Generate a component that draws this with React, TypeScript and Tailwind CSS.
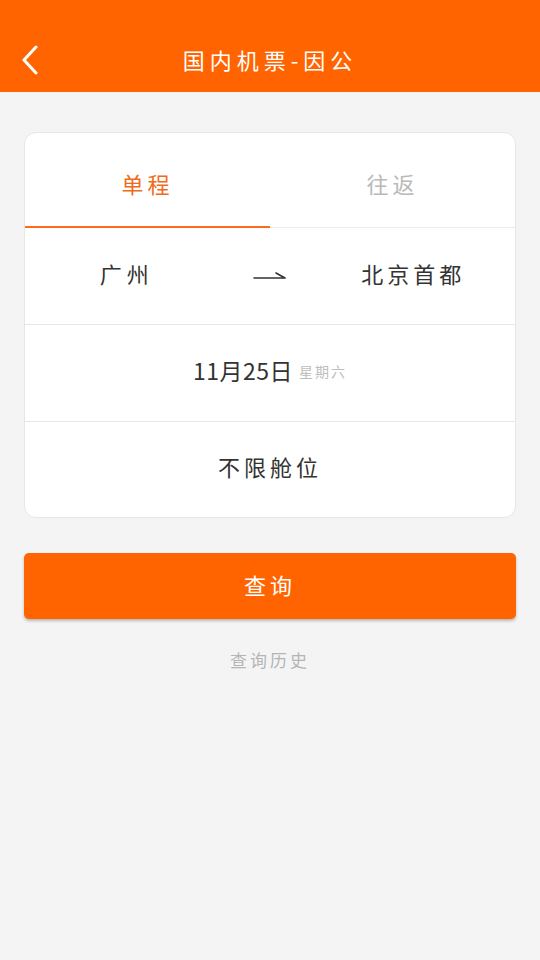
const FONT = { fontFamily: '"Noto Sans CJK SC", "Noto Sans", sans-serif' };

function BackIcon() {
  return (
    <svg width="20" height="30" viewBox="0 0 20 30" fill="none">
      <path d="M16 2 L4 15 L16 28" stroke="#fff" strokeWidth="3" strokeLinecap="round" strokeLinejoin="round" />
    </svg>
  );
}

function ArrowIcon() {
  return (
    <svg width="34" height="12" viewBox="0 0 34 12" fill="none">
      <path d="M1 9 H32 M23 4 L32 9" stroke="#333" strokeWidth="1.6" strokeLinecap="round" />
    </svg>
  );
}

export default function App() {
  return (
    <div className="min-h-[960px] w-[540px] bg-[#f4f4f4]" style={FONT}>
      {/* Header */}
      <div className="relative flex h-[92px] items-center justify-center bg-[#ff6400] pt-[26px]">
        <div className="absolute left-[20px] top-[45px]">
          <BackIcon />
        </div>
        <span className="text-[22px] tracking-[5px] text-white">国内机票-因公</span>
      </div>

      <div className="px-[24px] pt-[40px]">
        {/* Card */}
        <div className="overflow-hidden rounded-[12px] border border-[#e6e6e6] bg-white">
          {/* Tabs */}
          <div className="flex h-[95px] border-b border-[#ececec] pt-[6px]">
            <div className="relative flex flex-1 items-center justify-center">
              <span className="text-[22px] tracking-[4px] text-[#f06a1c]">单程</span>
              <div className="absolute bottom-[-1px] left-0 right-0 h-[2px] bg-[#ff6a1a]" />
            </div>
            <div className="flex flex-1 items-center justify-center">
              <span className="text-[22px] tracking-[4px] text-[#b9b9b9]">往返</span>
            </div>
          </div>

          {/* Cities */}
          <div className="grid h-[97px] grid-cols-3 items-center border-b border-[#e6e6e6] px-[30px] pb-[6px]">
            <span className="text-center text-[22px] tracking-[5px] text-[#333]">广州</span>
            <div className="flex justify-center pt-[4px]">
              <ArrowIcon />
            </div>
            <span className="text-center text-[22px] tracking-[4px] text-[#333]">北京首都</span>
          </div>

          {/* Date */}
          <div className="flex h-[97px] items-center justify-center gap-[6px] border-b border-[#e6e6e6] pb-[6px]">
            <span className="text-[23px] tracking-[0.5px] text-[#333]">11月25日</span>
            <span className="mt-[2px] text-[14px] tracking-[2px] text-[#bdbdbd]">星期六</span>
          </div>

          {/* Class */}
          <div className="flex h-[95px] items-center justify-center pb-[6px]">
            <span className="text-[22px] tracking-[4px] text-[#333]">不限舱位</span>
          </div>
        </div>

        {/* Search button */}
        <button className="mt-[35px] flex h-[66px] w-full items-center justify-center rounded-[5px] bg-[#ff6400] pb-[4px] shadow-[0_2px_3px_rgba(0,0,0,0.25)]">
          <span className="text-[22px] tracking-[4px] text-white">查询</span>
        </button>

        <div className="mt-[28px] text-center text-[17px] tracking-[3px] text-[#b5b5b5]">查询历史</div>
      </div>
    </div>
  );
}
